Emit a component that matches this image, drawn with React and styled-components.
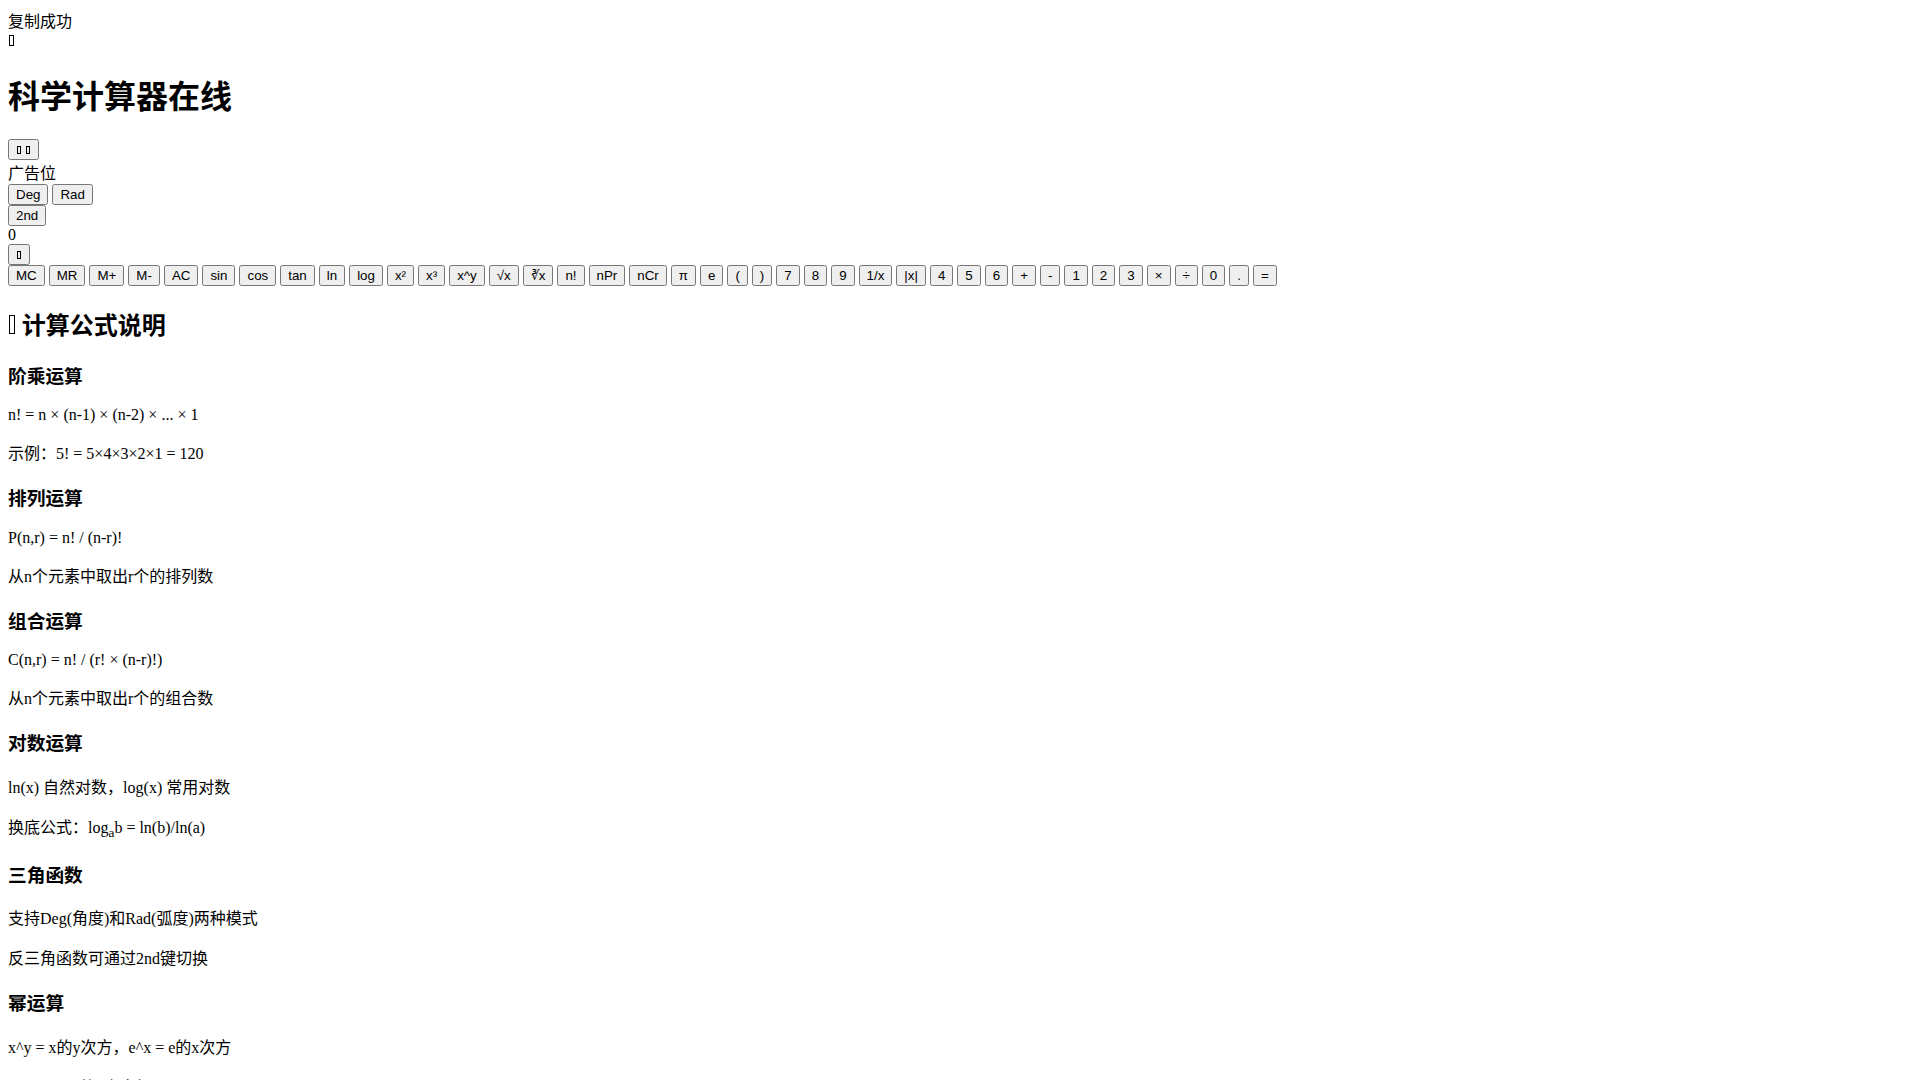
import React from 'react';
import styled, { createGlobalStyle } from 'styled-components';

const GlobalStyle = createGlobalStyle`
  body {
    margin: 8px;
    font-family: "Liberation Serif", "Noto Sans CJK SC", serif;
    font-size: 16px;
    color: #000;
    background: #fff;
  }
`;

const Toast = styled.div``;

// icon font is not loaded, so each icon shows as an empty glyph box
const Icon = styled.i`
  display: inline-block;
  box-sizing: border-box;
  width: ${(p) => p.$w || '0.3em'};
  height: ${(p) => p.$h || '0.66em'};
  margin: 0 1px;
  border: 1px solid currentColor;
  vertical-align: baseline;
`;

const Title = styled.h1`
  font-size: 2em;
  font-weight: bold;
  margin: 0.67em 0;
`;

const Key = styled.button`
  font-family: "Liberation Sans", Arial, "Noto Sans CJK SC", sans-serif;
  font-size: 13.333px;
`;

const AdSlot = styled.div``;

const Row = styled.div`
  display: flex;
  flex-wrap: wrap;
  gap: 4px;
`;

const Display = styled.div``;

const SectionTitle = styled.h2`
  font-size: 1.5em;
  font-weight: bold;
  margin: 0.83em 0;
`;

const Topic = styled.h3`
  font-size: 1.17em;
  font-weight: bold;
  margin: 1em 0;
`;

const Text = styled.p`
  margin: 1em 0;
`;

const keys = [
  'MC', 'MR', 'M+', 'M-', 'AC', 'sin', 'cos', 'tan', 'ln', 'log', 'x²', 'x³',
  'x^y', '√x', '∛x', 'n!', 'nPr', 'nCr', 'π', 'e', '(', ')', '7', '8', '9',
  '1/x', '|x|', '4', '5', '6', '+', '-', '1', '2', '3', '×', '÷', '0', '.', '=',
];

const formulas = [
  {
    title: '阶乘运算',
    lines: ['n! = n × (n-1) × (n-2) × ... × 1', '示例：5! = 5×4×3×2×1 = 120'],
  },
  {
    title: '排列运算',
    lines: ['P(n,r) = n! / (n-r)!', '从n个元素中取出r个的排列数'],
  },
  {
    title: '组合运算',
    lines: ['C(n,r) = n! / (r! × (n-r)!)', '从n个元素中取出r个的组合数'],
  },
  {
    title: '对数运算',
    lines: [
      'ln(x) 自然对数，log(x) 常用对数',
      <>换底公式：log<sub>a</sub>b = ln(b)/ln(a)</>,
    ],
  },
  {
    title: '三角函数',
    lines: ['支持Deg(角度)和Rad(弧度)两种模式', '反三角函数可通过2nd键切换'],
  },
  {
    title: '幂运算',
    lines: ['x^y = x的y次方，e^x = e的x次方', 'x^(1/y) = x的y次方根'],
  },
];

export default function App() {
  return (
    <>
      <GlobalStyle />
      <Toast>复制成功</Toast>
      <div>
        <Icon aria-hidden />
      </div>
      <Title>科学计算器在线</Title>
      <Key>
        <Icon aria-hidden $w="0.27em" $h="0.6em" /> <Icon aria-hidden $w="0.27em" $h="0.6em" />
      </Key>
      <AdSlot>广告位</AdSlot>
      <Row>
        <Key>Deg</Key>
        <Key>Rad</Key>
      </Row>
      <Row>
        <Key>2nd</Key>
      </Row>
      <Display>0</Display>
      <Key>
        <Icon aria-hidden $w="0.27em" $h="0.6em" />
      </Key>
      <Row>
        {keys.map((k) => (
          <Key key={k}>{k}</Key>
        ))}
      </Row>
      <SectionTitle>
        <Icon aria-hidden $w="0.24em" $h="0.78em" /> 计算公式说明
      </SectionTitle>
      {formulas.map((f) => (
        <section key={f.title}>
          <Topic>{f.title}</Topic>
          {f.lines.map((line, i) => (
            <Text key={i}>{line}</Text>
          ))}
        </section>
      ))}
    </>
  );
}
